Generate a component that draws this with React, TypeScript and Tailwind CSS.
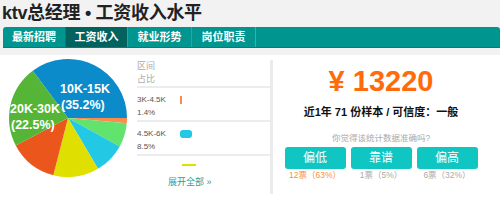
import React from "react";

const slices = [
  { pct: 35.2, color: "#0b8bc9" },
  { pct: 1.4, color: "#fb8c4e" },
  { pct: 6.6, color: "#62e36e" },
  { pct: 8.5, color: "#22c8e4" },
  { pct: 12.5, color: "#dfe002" },
  { pct: 13.3, color: "#eb561c" },
  { pct: 22.5, color: "#55b536" },
];

const cx = 68;
const cy = 63;
const r = 59;

function arc(a0: number, a1: number) {
  const rad = (d: number) => (d * Math.PI) / 180;
  const x0 = cx + r * Math.cos(rad(a0));
  const y0 = cy + r * Math.sin(rad(a0));
  const x1 = cx + r * Math.cos(rad(a1));
  const y1 = cy + r * Math.sin(rad(a1));
  const large = a1 - a0 > 180 ? 1 : 0;
  return `M${cx},${cy} L${x0},${y0} A${r},${r} 0 ${large} 1 ${x1},${y1} Z`;
}

function Pie() {
  let start = -126.7;
  return (
    <svg width="132" height="145" viewBox="0 0 132 145">
      {slices.map((s, i) => {
        const a0 = start;
        const a1 = start + (s.pct / 100) * 360;
        start = a1;
        return <path key={i} d={arc(a0, a1)} fill={s.color} />;
      })}
      <g
        fill="#fff"
        fontFamily="'Liberation Sans', Arial, sans-serif"
        fontWeight="bold"
        fontSize="12.5"
      >
        <text x="60" y="38">10K-15K</text>
        <text x="61" y="54">(35.2%)</text>
        <text x="10" y="58">20K-30K</text>
        <text x="11" y="74">(22.5%)</text>
      </g>
    </svg>
  );
}

const rows = [
  { range: "3K-4.5K", pct: "1.4%", color: "bg-[#fb8c4e]", w: "w-[2px]", round: "" },
  { range: "4.5K-6K", pct: "8.5%", color: "bg-[#22c8e4]", w: "w-[12px]", round: "rounded-[3px]" },
];

export default function App() {
  return (
    <div
      className="w-[500px] h-[200px] overflow-hidden bg-[#f2f2f2] text-[#222]"
      style={{ fontFamily: "'Liberation Sans', Arial, 'Noto Sans CJK SC', sans-serif" }}
    >
      <h1 className="h-[27px] pl-[2px] pt-[1px] text-[18px] leading-[24px] font-bold tracking-[-0.3px]">
        ktv总经理 • 工资收入水平
      </h1>

      <nav className="ml-[3px] flex h-[21px] rounded-t-[3px] bg-[#00968f] border-b border-[#00807a] text-[11px] font-bold leading-[20px] text-white">
        <div className="w-[63px] text-center border-r border-[#007a75]">最新招聘</div>
        <div className="w-[62px] text-center bg-[#02625e] border-r border-[#2aa5a0]">工资收入</div>
        <div className="w-[64px] text-center border-r border-[#2aa5a0]">就业形势</div>
        <div className="w-[64px] text-center border-r border-[#3aaeaa]">岗位职责</div>
      </nav>

      <div className="mt-[7px] flex h-[145px] bg-white">
        <div className="w-[137px] shrink-0">
          <Pie />
        </div>

        <div className="w-[133px] shrink-0 flex flex-col">
          <div className="h-[111px] overflow-hidden">
            <div className="h-[33px] pt-[5px] border-b-2 border-[#ececec] text-[9px] leading-[12.5px] text-[#aaa]">
              <div>区间</div>
              <div>占比</div>
            </div>
            {rows.map((row) => (
              <div
                key={row.range}
                className="flex h-[34px] pt-[5px] border-b-2 border-[#ececec] text-[8px] leading-[13px] text-[#555]"
              >
                <div className="w-[43px] shrink-0">
                  <div>{row.range}</div>
                  <div>{row.pct}</div>
                </div>
                <div className={`mt-[3px] h-[8px] ${row.w} ${row.color} ${row.round}`} />
              </div>
            ))}
            {/* next row is clipped: only the top of its bar shows */}
            <div className="flex pt-[8px] pl-[45px]">
              <div className="h-[8px] w-[14px] bg-[#dfe002]" />
            </div>
          </div>
          <div className="mt-[11px] pl-[31px] text-[9px] leading-[11px] text-[#2c9e9a]">展开全部 »</div>
        </div>

        <div className="mt-[5px] mb-[6px] w-[3px] shrink-0 bg-[#ebebeb]" />

        <div className="w-[216px] shrink-0 flex flex-col items-center">
          <div className="mt-[12px] text-[29px] leading-[29px] font-bold text-[#ff6a0a]">¥ 13220</div>
          <div className="mt-[9px] text-[11px] leading-[14px] font-bold text-[#111]">
            近1年 71 份样本 / 可信度：一般
          </div>
          <div className="mt-[14px] text-[8.5px] leading-[11px] text-[#aaa]">你觉得该统计数据准确吗?</div>
          <div className="mt-[3px] flex gap-[5px]">
            {[
              { label: "偏低", vote: "12票（63%）", vc: "text-[#f7923a]" },
              { label: "靠谱", vote: "1票（5%）", vc: "text-[#aaa]" },
              { label: "偏高", vote: "6票（32%）", vc: "text-[#aaa]" },
            ].map((b) => (
              <div key={b.label} className="flex w-[61px] flex-col items-center">
                <button className="h-[22px] w-[61px] rounded-[3px] bg-[#0fc6c2] text-[12px] leading-[22px] text-white">
                  {b.label}
                </button>
                <div className={`mt-[1px] text-[8.5px] leading-[10px] ${b.vc}`}>{b.vote}</div>
              </div>
            ))}
          </div>
        </div>
      </div>
    </div>
  );
}
